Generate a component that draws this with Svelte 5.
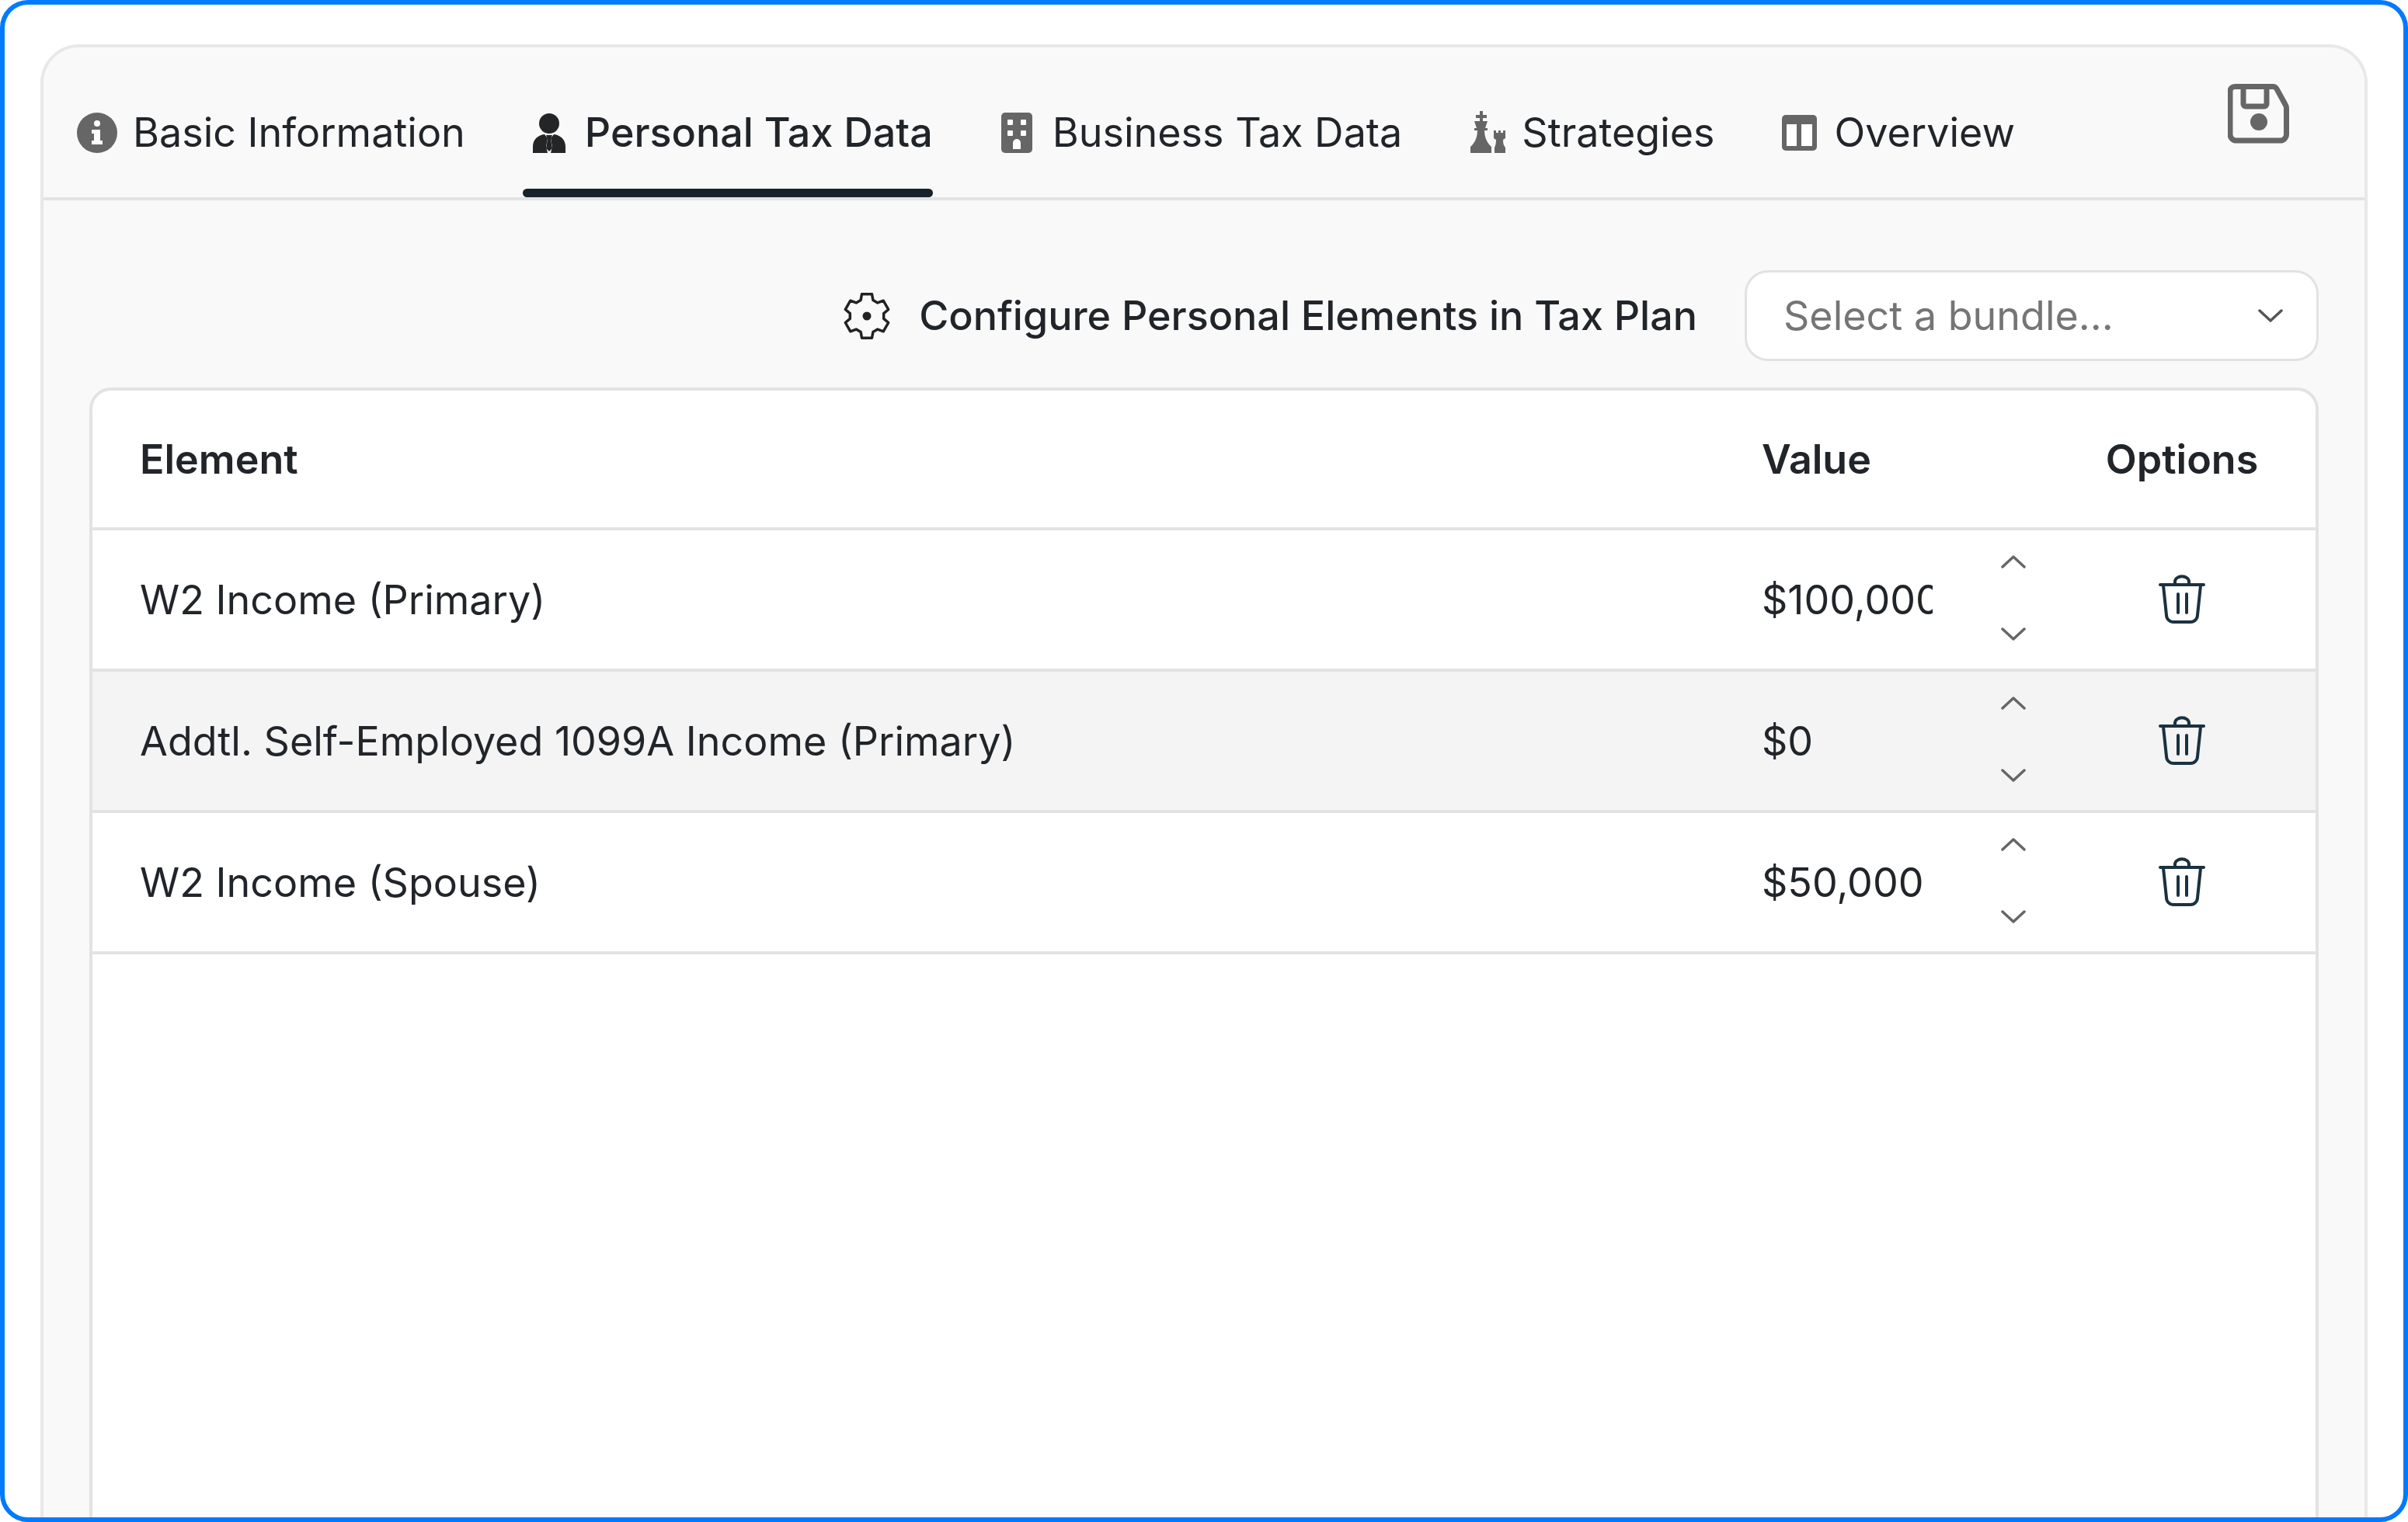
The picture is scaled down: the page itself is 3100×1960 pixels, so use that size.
<script>
  const rows = [
    { name: 'W2 Income (Primary)', value: '$100,000' },
    { name: 'Addtl. Self-Employed 1099A Income (Primary)', value: '$0' },
    { name: 'W2 Income (Spouse)', value: '$50,000' }
  ];

  // six tooth gear outline, centre at 30,31
  const gearPoints = [];
  for (let i = 0; i < 6; i++) {
    const a = (i * 60 - 90) * Math.PI / 180;
    for (const [r, d] of [[22, -21], [29, -13], [29, 13], [22, 21]]) {
      const t = a + d * Math.PI / 180;
      gearPoints.push(`${(30 + r * Math.cos(t)).toFixed(1)},${(31 + r * Math.sin(t)).toFixed(1)}`);
    }
  }
  const gear = gearPoints.join(' ');
</script>

<div class="frame">
  <div class="card">
    <div class="tabbar">
      <nav class="tabs">
        <div class="tab">
          <svg class="icon" viewBox="0 0 52 52">
            <circle cx="26" cy="26" r="26" fill="#666" />
            <circle cx="26" cy="14" r="4" fill="#fff" />
            <path d="M19 22h11v14h3v5H19v-5h3v-9h-3z" fill="#fff" />
          </svg>
          <span>Basic Information</span>
        </div>
        <div class="tab active">
          <svg class="icon" viewBox="0 0 52 52">
            <circle cx="26" cy="14" r="13" fill="#232527" />
            <path d="M5 52v-8c0-9 6-15 15-16l4 5-2 11 2 8zM47 52v-8c0-9-6-15-15-16l-4 5 2 11-2 8z" fill="#232527" />
            <path d="M22 29h8l-2 5 2 12-4 4-4-4 2-12z" fill="#232527" />
          </svg>
          <span>Personal Tax Data</span>
        </div>
        <div class="tab">
          <svg class="icon" viewBox="0 0 52 52">
            <rect x="6" y="0" width="40" height="52" rx="5" fill="#666" />
            <g fill="#fff">
              <rect x="14" y="9" width="7" height="7" rx="1" />
              <rect x="31" y="9" width="7" height="7" rx="1" />
              <rect x="14" y="23" width="7" height="7" rx="1" />
              <rect x="31" y="23" width="7" height="7" rx="1" />
              <path d="M21 47V39a5 5 0 0 1 10 0v8z" />
            </g>
          </svg>
          <span>Business Tax Data</span>
        </div>
        <div class="tab">
          <svg class="icon" viewBox="0 0 52 52">
            <path d="M18 -2h4v5h5v4h-5v4h6l-3 9h3v3h-4c0 7 2 13 6 18l3 3v8H6v-8l3-3c4-5 6-11 6-18h-4v-3h3L11 11h7V7h-5V3h5z" fill="#666" />
            <path d="M36 23h3v3h3v-3h3v3h3v-3h3v10l-3 2c0 5 1 8 3 10v7H37v-7c1-2 2-5 2-10l-3-2z" fill="#666" />
          </svg>
          <span>Strategies</span>
        </div>
        <div class="tab">
          <svg class="icon" viewBox="0 0 52 52">
            <rect x="4" y="3" width="45" height="46" rx="5" fill="#666" />
            <rect x="10" y="15" width="13" height="28" fill="#fff" />
            <rect x="29" y="15" width="14" height="28" fill="#fff" />
          </svg>
          <span>Overview</span>
        </div>
      </nav>
      <svg class="save" viewBox="0 0 79 77" fill="none" stroke="#666" stroke-width="7" stroke-linejoin="round">
        <path d="M9 3.5h49a6 6 0 0 1 5 3l11 20a9 9 0 0 1 1.500 5V65a8 8 0 0 1-8 8H11a8 8 0 0 1-8-8V9.500a6 6 0 0 1 6-6z" />
        <path d="M20 4v22a3 3 0 0 0 3 3h24a3 3 0 0 0 3-3V4" />
        <circle cx="40" cy="49" r="11" fill="#666" stroke="none" />
      </svg>
    </div>

    <div class="body">
      <div class="config">
        <svg class="gear" viewBox="0 0 60 62">
          <polygon points={gear} fill="none" stroke="#222" stroke-width="3.500" stroke-linejoin="round" />
          <circle cx="30" cy="31" r="5.500" fill="#222" />
        </svg>
        <h2>Configure Personal Elements in Tax Plan</h2>
        <div class="select">
          <span>Select a bundle...</span>
          <svg class="caret" viewBox="0 0 32 17" fill="none" stroke="#555" stroke-width="3.500" stroke-linecap="round" stroke-linejoin="round">
            <path d="M2 2l14 13L30 2" />
          </svg>
        </div>
      </div>

      <div class="table">
        <div class="row head">
          <div>Element</div>
          <div class="value-head">Value</div>
          <div class="options">Options</div>
        </div>
        {#each rows as row, i}
          <div class="row" class:shaded={i === 1}>
            <div>{row.name}</div>
            <div class="value">{row.value}</div>
            <div class="spin">
              <svg viewBox="0 0 32 18" fill="none" stroke="#666" stroke-width="3.500" stroke-linecap="round" stroke-linejoin="round">
                <path d="M2 16L16 3l14 13" />
              </svg>
              <svg viewBox="0 0 32 18" fill="none" stroke="#666" stroke-width="3.500" stroke-linecap="round" stroke-linejoin="round">
                <path d="M2 2l14 13L30 2" />
              </svg>
            </div>
            <div class="options">
              <svg class="trash" viewBox="0 0 60 62" fill="none" stroke="#1b3140" stroke-width="4" stroke-linecap="round" stroke-linejoin="round">
                <path d="M2 12h56" />
                <path d="M21 12V8a8 6 0 0 1 18 0v4" />
                <path d="M6 13l4 38a9 9 0 0 0 9 9h22a9 9 0 0 0 9-9l4-38" />
                <path d="M25 24v24M36 24v24" />
              </svg>
            </div>
          </div>
        {/each}
      </div>
    </div>
  </div>
</div>

<style>
  :global(body) {
    margin: 0;
    background: #fff;
  }

  .frame {
    box-sizing: border-box;
    width: 3100px;
    height: 1960px;
    border: 6px solid #007aff;
    border-radius: 36px;
    padding: 51px 46px 0;
    background: #fff;
    overflow: hidden;
    font-family: Inter, "Liberation Sans", sans-serif;
    color: #212529;
  }

  .card {
    box-sizing: border-box;
    height: 2000px;
    background: #f9f9f9;
    border: 4px solid #e8e8e8;
    border-radius: 50px 50px 0 0;
  }

  .tabbar {
    display: flex;
    justify-content: space-between;
    align-items: flex-start;
    padding: 0 97px 0 35px;
    border-bottom: 4px solid #e3e3e3;
  }

  .tabs {
    display: flex;
    gap: 74px;
  }

  .tab {
    position: relative;
    display: flex;
    align-items: center;
    gap: 20px;
    padding: 84px 0 57px 8px;
    font-size: 52px;
    line-height: 52px;
    white-space: nowrap;
  }

  .tab.active {
    font-weight: 500;
  }

  .tab.active::after {
    content: '';
    position: absolute;
    left: 0;
    right: 0;
    bottom: 0;
    height: 11px;
    border-radius: 6px;
    background: #15222a;
  }

  .icon {
    width: 52px;
    height: 52px;
    flex: none;
    overflow: visible;
  }

  .save {
    width: 79px;
    height: 77px;
    margin-top: 47px;
  }

  .body {
    padding: 90px 59px 0;
  }

  .config {
    display: flex;
    justify-content: flex-end;
    align-items: center;
    margin-bottom: 34px;
  }

  .gear {
    width: 60px;
    height: 62px;
    margin-right: 37px;
  }

  .config h2 {
    margin: 0 61px 0 0;
    font-size: 52px;
    font-weight: 500;
    line-height: 62px;
  }

  .select {
    box-sizing: border-box;
    width: 739px;
    height: 117px;
    display: flex;
    justify-content: space-between;
    align-items: center;
    padding: 0 43px 0 47px;
    background: #fff;
    border: 3px solid #e2e2e2;
    border-radius: 30px;
    font-size: 52px;
    color: #757575;
  }

  .caret {
    width: 32px;
    height: 17px;
  }

  .table {
    min-height: 1600px;
    background: #fff;
    border: 4px solid #e3e3e3;
    border-radius: 28px 28px 0 0;
    overflow: hidden;
  }

  .row {
    box-sizing: border-box;
    display: grid;
    grid-template-columns: 2088px 220px 208px 226px;
    align-items: center;
    height: 182px;
    padding-left: 61px;
    border-bottom: 4px solid #e3e3e3;
    font-size: 52px;
  }

  .row.head {
    height: 180px;
    font-weight: 600;
  }

  .value-head {
    grid-column: span 2;
  }

  .row.shaded {
    background: #f4f4f4;
  }

  .value {
    overflow: hidden;
    white-space: nowrap;
  }

  .spin {
    display: flex;
    flex-direction: column;
    align-items: center;
    gap: 76px;
    transform: translateY(-2px);
  }

  .spin svg {
    width: 32px;
    height: 18px;
    display: block;
  }

  .options {
    display: flex;
    justify-content: center;
  }

  .trash {
    width: 60px;
    height: 62px;
    overflow: visible;
  }
</style>
